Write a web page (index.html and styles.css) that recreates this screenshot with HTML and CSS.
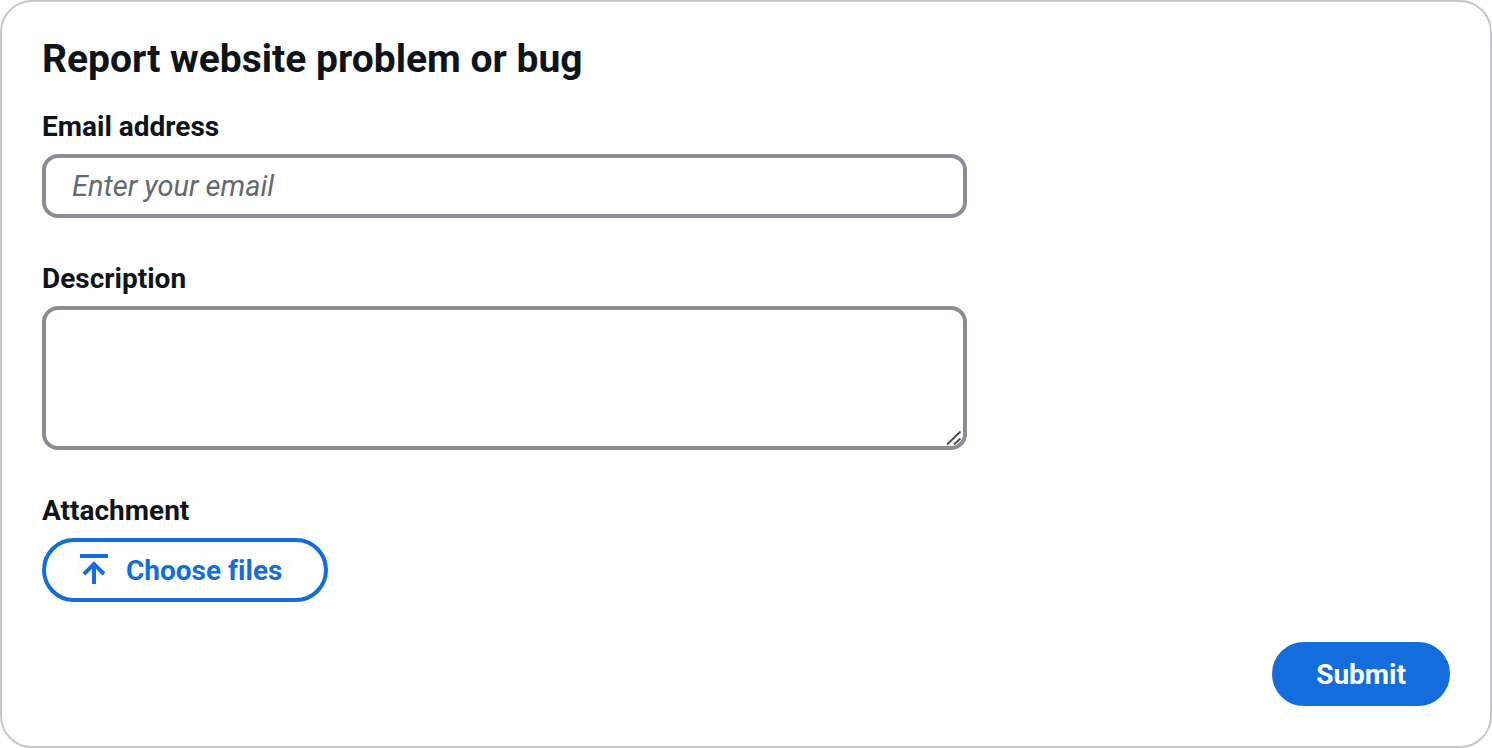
FILE: index.html
```html
<!DOCTYPE html>
<html lang="en">
<head>
<meta charset="utf-8">
<title>Report website problem or bug</title>
<link rel="stylesheet" href="styles.css">
</head>
<body>
<form class="card">
  <h1 class="title">Report website problem or bug</h1>
  <div class="field">
    <label class="label" for="email">Email address</label>
    <input class="control input" id="email" type="email" placeholder="Enter your email">
  </div>
  <div class="field">
    <label class="label" for="description">Description</label>
    <div class="textarea-wrap">
      <textarea class="control textarea" id="description"></textarea>
      <svg class="grip" viewBox="0 0 16 16" fill="none" stroke="#4a4a4a" stroke-width="1.8" aria-hidden="true">
        <path d="M1 14.5L14.5 1.5M8 14.5L14.5 8.5"/>
      </svg>
    </div>
  </div>
  <div class="field">
    <span class="label" id="attachment">Attachment</span>
    <button class="button upload" type="button" aria-describedby="attachment">
      <svg class="icon" viewBox="0 0 32 32" fill="none" stroke="currentColor" stroke-width="4" aria-hidden="true">
        <path d="M2 2H30M16 30V11M6 20L16 10L26 20"/>
      </svg>
      Choose files
    </button>
  </div>
  <div class="actions">
    <button class="button submit" type="submit">Submit</button>
  </div>
</form>
</body>
</html>
```
FILE: styles.css
```css
* {
  box-sizing: border-box;
}

body {
  margin: 0;
  background: #fff;
  color: #0f141a;
  font-family: Roboto, sans-serif;
}

.card {
  display: flex;
  flex-direction: column;
  padding: 32px 40px 40px;
  border: 2px solid #c6c6cd;
  border-radius: 32px;
  background: #fff;
}

.title {
  margin: 0 0 22px;
  font-size: 39px;
  line-height: 50px;
  font-weight: 700;
}

.field {
  display: flex;
  flex-direction: column;
  align-items: flex-start;
  margin-bottom: 40px;
}

.label {
  margin-bottom: 6px;
  font-size: 28px;
  line-height: 42px;
  font-weight: 700;
}

/* Eight of twelve columns with 40px gutters */
.input,
.textarea-wrap {
  width: calc((100% + 40px) * 2 / 3 - 40px);
}

.control {
  border: 4px solid #8c8c94;
  border-radius: 16px;
  background: #fff;
  color: #0f141a;
  font-family: inherit;
  font-size: 28px;
}

.input {
  height: 64px;
  padding: 0 26px;
}

.input::placeholder {
  color: #656871;
  font-size: 29px;
  font-style: italic;
  opacity: 1;
}

.textarea-wrap {
  position: relative;
}

.textarea {
  display: block;
  width: 100%;
  height: 144px;
  padding: 8px 26px;
  resize: vertical;
}

.textarea::-webkit-resizer {
  background: transparent;
}

.grip {
  position: absolute;
  right: 5px;
  bottom: 4px;
  width: 16px;
  height: 16px;
  pointer-events: none;
}

.button {
  display: flex;
  align-items: center;
  height: 64px;
  border: 4px solid #136ddc;
  border-radius: 32px;
  font-family: inherit;
  font-size: 28px;
  line-height: 41px;
  font-weight: 700;
  font-variant-ligatures: none;
}

.upload {
  gap: 16px;
  padding: 0 42px 0 32px;
  background: #fff;
  color: #136ddc;
}

.icon {
  width: 32px;
  height: 32px;
}

.actions {
  display: flex;
  justify-content: flex-end;
}

.submit {
  padding: 0 40px;
  background: #136ddc;
  color: #fff;
}
```
